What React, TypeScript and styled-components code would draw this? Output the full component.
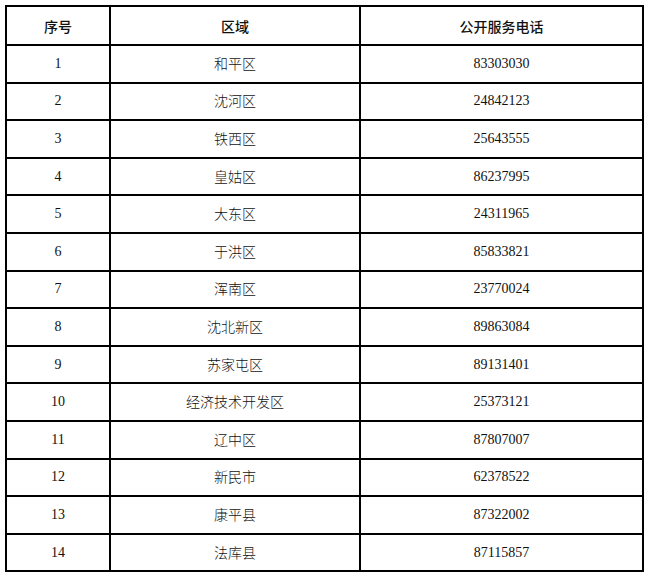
import React from 'react';
import styled, { createGlobalStyle } from 'styled-components';

const GlobalStyle = createGlobalStyle`
	body {
		margin: 0;
		background: #fff;
		font-family: 'Liberation Serif', 'Noto Sans CJK SC', serif;
		color: #111;
	}
`;

const rows: [string, string][] = [
	['和平区', '83303030'],
	['沈河区', '24842123'],
	['铁西区', '25643555'],
	['皇姑区', '86237995'],
	['大东区', '24311965'],
	['于洪区', '85833821'],
	['浑南区', '23770024'],
	['沈北新区', '89863084'],
	['苏家屯区', '89131401'],
	['经济技术开发区', '25373121'],
	['辽中区', '87807007'],
	['新民市', '62378522'],
	['康平县', '87322002'],
	['法库县', '87115857'],
];

const Page = styled.div`
	padding: 5px 0 0 5px;
`;

const Table = styled.table`
	border-collapse: collapse;
	width: 639px;
	table-layout: fixed;
	font-size: 14px;
`;

const HeadCell = styled.th<{ $w?: number }>`
	${(p) => (p.$w ? `width: ${p.$w}px;` : '')}
	height: 37px;
	border: 2px solid #000;
	padding: 0;
	text-align: center;
	vertical-align: middle;
	font-family: 'Noto Sans CJK SC', sans-serif;
	font-weight: 500;
	font-size: 14px;
	color: #111;
`;

const Cell = styled.td`
	height: 35.6px;
	border: 2px solid #000;
	padding: 0;
	text-align: center;
	vertical-align: middle;
	line-height: 1;
`;

const Region = styled.span`
	font-family: 'Noto Sans CJK SC', sans-serif;
	font-weight: 300;
`;

export default function App() {
	return (
		<Page>
			<GlobalStyle />
			<Table>
				<thead>
					<tr>
						<HeadCell $w={102}>序号</HeadCell>
						<HeadCell $w={248}>区域</HeadCell>
						<HeadCell>公开服务电话</HeadCell>
					</tr>
				</thead>
				<tbody>
					{rows.map(([name, phone], i) => (
						<tr key={name}>
							<Cell>{i + 1}</Cell>
							<Cell>
								<Region>{name}</Region>
							</Cell>
							<Cell>{phone}</Cell>
						</tr>
					))}
				</tbody>
			</Table>
		</Page>
	);
}
